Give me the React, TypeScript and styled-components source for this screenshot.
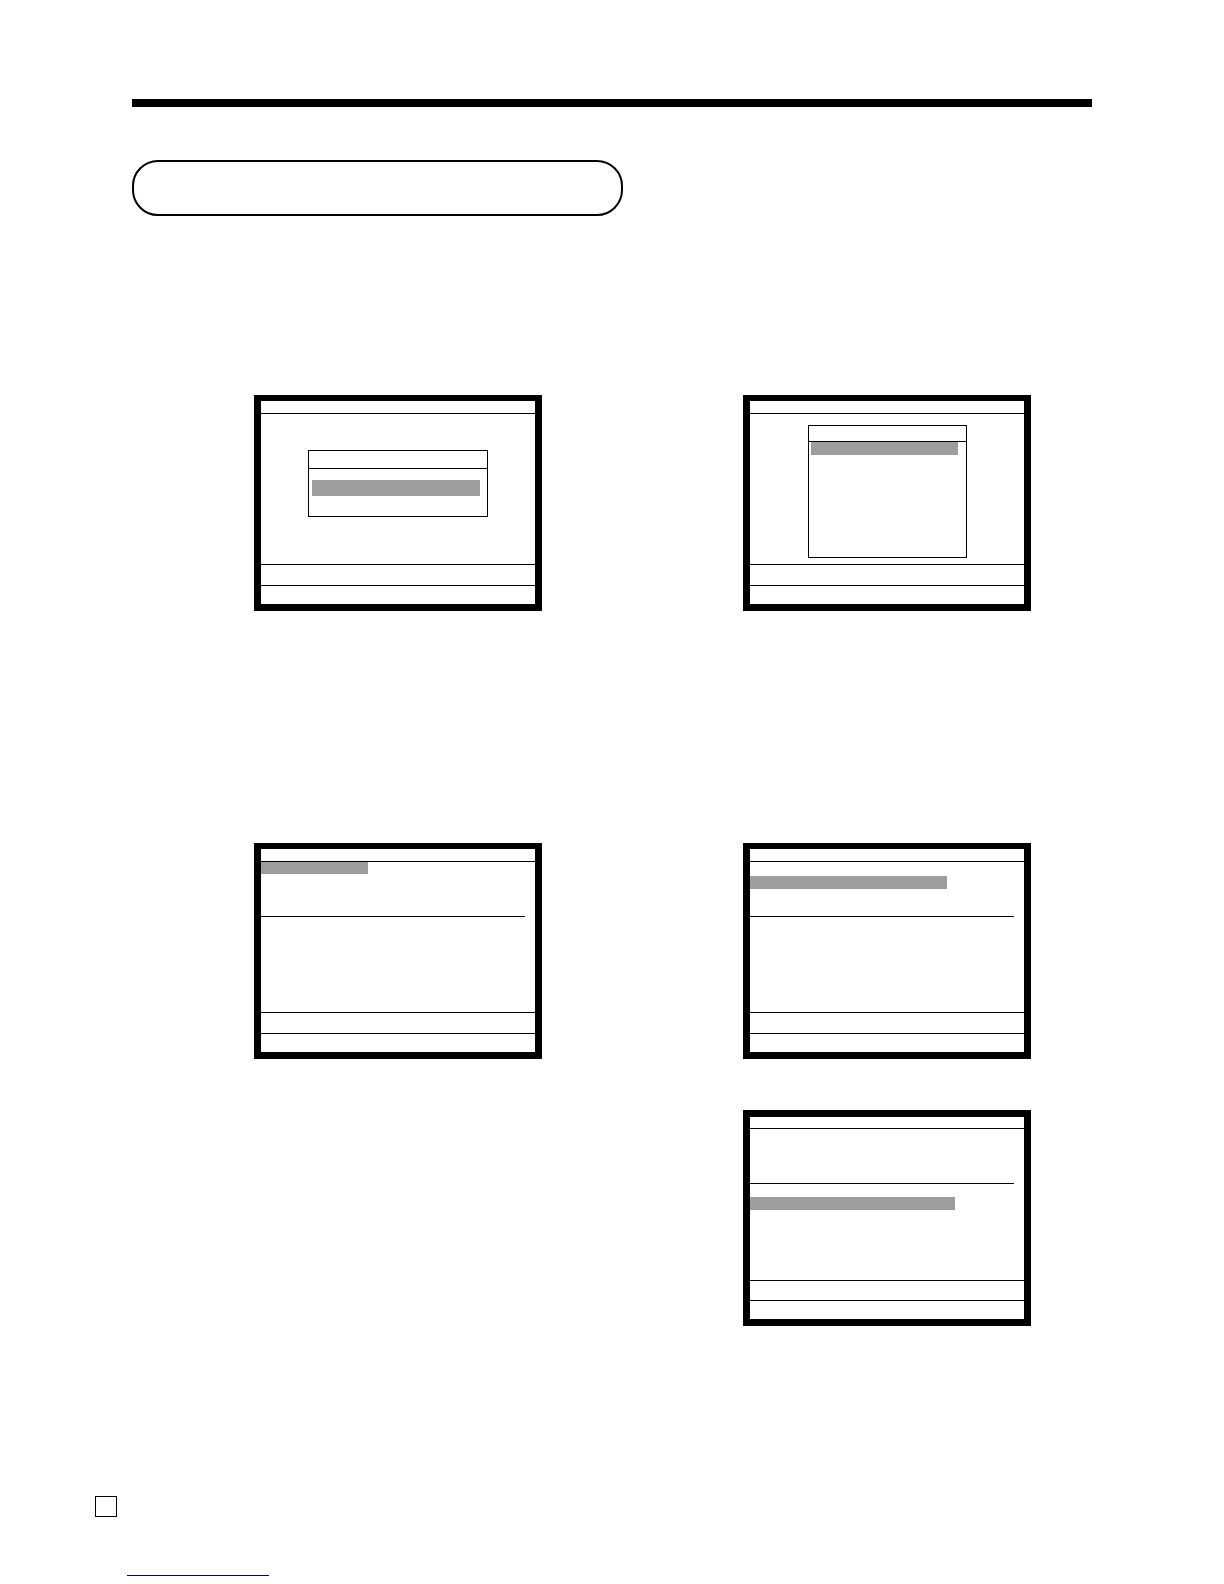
import React from "react";
import styled, { createGlobalStyle } from "styled-components";

const ink = "#000";
const grey = "#9d9d9d";

const GlobalStyle = createGlobalStyle`
  *, *::before, *::after { box-sizing: border-box; }
  body {
    margin: 0;
    background: #fff;
    color: ${ink};
    font-family: "Liberation Sans", Arial, sans-serif;
  }
`;

const Page = styled.div`
  display: flex;
  flex-direction: column;
  padding: 99px 0 8px;
`;

const Content = styled.main`
  display: flex;
  flex-direction: column;
  padding: 0 132px;
`;

const TopBar = styled.div`
  height: 8px;
  background: ${ink};
`;

const TitleBox = styled.div`
  width: 491px;
  max-width: 100%;
  height: 56px;
  margin-top: 53px;
  border: 2px solid ${ink};
  border-radius: 26px;
`;

const Steps = styled.section<{ $space: number }>`
  display: grid;
  grid-template-columns: 1fr 1fr;
  gap: 51px 18px;
  margin-top: ${(p) => p.$space}px;
`;

const Step = styled.div<{ $second?: boolean }>`
  grid-column: ${(p) => (p.$second ? 2 : 1)};
  padding-left: 122px;
`;

const Display = styled.div<{ $top: number }>`
  display: flex;
  flex-direction: column;
  width: 288px;
  height: 216px;
  border: 7px solid ${ink};
  border-top-width: ${(p) => p.$top}px;
`;

const DisplayHead = styled.div<{ $height: number }>`
  height: ${(p) => p.$height}px;
  border-bottom: 1px solid ${ink};
`;

const DisplayBody = styled.div`
  display: flex;
  flex: 1;
  flex-direction: column;
`;

const DisplayFoot = styled.div<{ $height: number }>`
  height: ${(p) => p.$height}px;
  border-top: 1px solid ${ink};
`;

const Popup = styled.div<{ $width: number; $height: number; $top: number }>`
  display: flex;
  flex-direction: column;
  align-self: center;
  width: ${(p) => p.$width}px;
  height: ${(p) => p.$height}px;
  margin-top: ${(p) => p.$top}px;
  border: 1px solid ${ink};
`;

const PopupHead = styled.div<{ $height: number }>`
  height: ${(p) => p.$height}px;
  border-bottom: 1px solid ${ink};
`;

const Highlight = styled.div<{
  $width: number;
  $height: number;
  $top?: number;
  $indent?: number;
}>`
  width: ${(p) => p.$width}px;
  height: ${(p) => p.$height}px;
  margin-top: ${(p) => p.$top ?? 0}px;
  margin-left: ${(p) => p.$indent ?? 0}px;
  background: ${grey};
`;

const Upper = styled.div<{ $lead?: number }>`
  height: 55px;
  margin-right: 10px;
  padding-top: ${(p) => p.$lead ?? 0}px;
  border-bottom: 1px solid ${ink};
`;

const Footer = styled.footer`
  display: flex;
  flex-direction: column;
  align-items: flex-start;
  margin-top: 170px;
  padding-left: 95px;
`;

const PageNumber = styled.div`
  width: 22px;
  height: 21px;
  border: 1px solid ${ink};
`;

const SiteLink = styled.a`
  width: 142px;
  height: 18px;
  margin: 41px 0 0 32px;
  border-bottom: 1px solid #000080;
`;

type ScreenProps = {
  compact?: boolean;
  children: React.ReactNode;
};

function Screen({ compact, children }: ScreenProps) {
  return (
    <Display $top={compact ? 7 : 6}>
      <DisplayHead $height={compact ? 12 : 13} />
      <DisplayBody>{children}</DisplayBody>
      <DisplayFoot $height={compact ? 20 : 21} />
      <DisplayFoot $height={19} />
    </Display>
  );
}

export default function App() {
  return (
    <>
      <GlobalStyle />
      <Page>
        <Content>
          <TopBar />
          <TitleBox />

          <Steps $space={179}>
            <Step>
              <Screen>
                <Popup $width={180} $height={67} $top={36}>
                  <PopupHead $height={18} />
                  <Highlight $width={168} $height={16} $top={11} $indent={3} />
                </Popup>
              </Screen>
            </Step>
            <Step $second>
              <Screen>
                <Popup $width={159} $height={133} $top={11}>
                  <PopupHead $height={16} />
                  <Highlight $width={147} $height={13} $indent={2} />
                </Popup>
              </Screen>
            </Step>
          </Steps>

          <Steps $space={232}>
            <Step>
              <Screen>
                <Upper>
                  <Highlight $width={107} $height={12} />
                </Upper>
              </Screen>
            </Step>
            <Step $second>
              <Screen>
                <Upper $lead={14}>
                  <Highlight $width={197} $height={13} />
                </Upper>
              </Screen>
            </Step>
            <Step $second>
              <Screen compact>
                <Upper />
                <Highlight $width={205} $height={13} $top={13} />
              </Screen>
            </Step>
          </Steps>
        </Content>

        <Footer>
          <PageNumber />
          <SiteLink href="#" aria-label="Website" />
        </Footer>
      </Page>
    </>
  );
}
